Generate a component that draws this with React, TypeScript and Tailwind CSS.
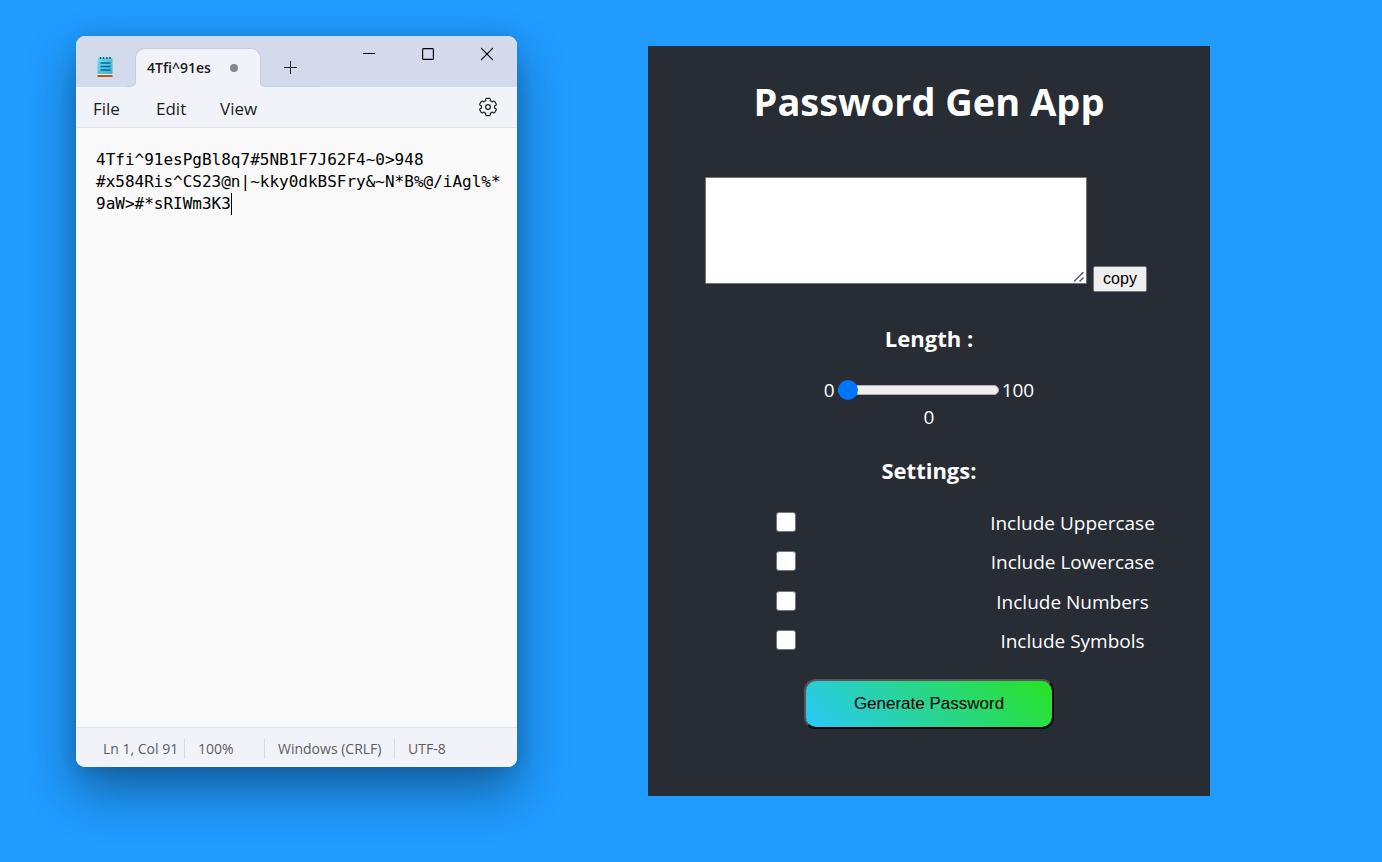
import { useState } from "react";

const OPTIONS = ["Uppercase", "Lowercase", "Numbers", "Symbols"];

function NotepadLogo() {
  return (
    <svg width="16" height="22" viewBox="0 0 16 22" aria-hidden="true">
      <defs>
        <linearGradient id="pad" x1="0" y1="0" x2="1" y2="1">
          <stop offset="0" stopColor="#6fdcf0" />
          <stop offset="1" stopColor="#39afd0" />
        </linearGradient>
      </defs>
      <rect x="0.5" y="17" width="15" height="2" fill="#f3ece6" />
      <rect x="0.5" y="19" width="15" height="2" fill="#b5560f" />
      <rect x="0.5" y="2" width="15" height="16" rx="0.5" fill="url(#pad)" />
      <path d="M3.5 1v2M6.5 1v2M10 1v2M13 1v2" stroke="#0d5f85" strokeWidth="1.6" />
      <path d="M3.5 7h10M3.5 10.5h10M3.5 14h10" stroke="#0a6a93" strokeWidth="1.7" />
    </svg>
  );
}

function polar(degrees: number, radius: number) {
  const a = (degrees * Math.PI) / 180;
  return `${(10 + radius * Math.cos(a)).toFixed(2)} ${(10 + radius * Math.sin(a)).toFixed(2)}`;
}

const GEAR_PATH =
  [0, 1, 2, 3, 4, 5]
    .map((k) => {
      const a = 30 + 60 * k;
      return `${k === 0 ? "M" : "L"}${polar(a - 19, 6.9)}L${polar(a - 17, 8.1)}Q${polar(a - 15, 8.7)} ${polar(a - 11, 8.7)}L${polar(a + 11, 8.7)}Q${polar(a + 15, 8.7)} ${polar(a + 17, 8.1)}L${polar(a + 19, 6.9)}Q${polar(a + 21, 6.3)} ${polar(a + 26, 6.7)}L${polar(a + 34, 6.7)}Q${polar(a + 39, 6.3)} ${polar(a + 41, 6.9)}`;
    })
    .join("") + "Z";

function GearIcon() {
  return (
    <svg width="20" height="20" viewBox="0 0 20 20" fill="none" stroke="#222" strokeWidth="1.2" strokeLinejoin="round" aria-hidden="true">
      <path d={GEAR_PATH} />
      <circle cx="10" cy="10" r="2.4" />
    </svg>
  );
}

function Notepad() {
  return (
    <section
      aria-label="Notepad"
      className="mt-9 flex h-[731px] w-[441px] shrink-0 flex-col overflow-hidden rounded-[9px] bg-[#f9f9f9] font-['Open_Sans',sans-serif] text-[#1b1b1b] shadow-[0_24px_48px_rgba(0,0,0,0.38),0_0_16px_rgba(0,0,0,0.12)]"
    >
      <header className="flex h-[51px] shrink-0 items-end bg-[#d2daeb]">
        <div className="flex h-10 w-[59px] items-center pl-[21px]">
          <NotepadLogo />
        </div>
        <div className="relative flex h-[39px] w-[126px] items-center justify-between rounded-t-[10px] border border-b-0 border-[#c6cde2] bg-[#f2f3f9] pr-[22px] pl-[11px]">
          <svg width="10" height="6" viewBox="0 0 10 6" className="absolute bottom-0 -left-[10px]" aria-hidden="true">
            <path d="M0 6h10V0Q10 5.500 4 5.500H0Z" fill="#f2f3f9" />
            <path d="M10 0Q10 5.500 4 5.500H0" fill="none" stroke="#c6cde2" />
          </svg>
          <svg width="10" height="6" viewBox="0 0 10 6" className="absolute -right-[10px] bottom-0" aria-hidden="true">
            <path d="M10 6H0V0Q0 5.500 6 5.500H10Z" fill="#f2f3f9" />
            <path d="M0 0Q0 5.500 6 5.500H10" fill="none" stroke="#c6cde2" />
          </svg>
          <span className="text-sm font-semibold">4Tfi^91es</span>
          <span className="size-2 rounded-full bg-[#868789]" />
        </div>
        <button aria-label="New tab" className="flex h-[39px] w-[58px] items-center justify-center border-b border-[#c9cfe2]">
          <svg width="13" height="13" viewBox="0 0 13 13" stroke="#222" fill="none">
            <path d="M6.5 0v13M0 6.5h13" />
          </svg>
        </button>
        <div className="flex h-full flex-1 justify-end gap-[47px] pt-[11px] pr-6">
          <button aria-label="Minimize" className="size-3">
            <svg width="12" height="14" viewBox="0 0 12 14" stroke="#000" fill="none">
              <path d="M0 6.5h12" />
            </svg>
          </button>
          <button aria-label="Maximize" className="size-3">
            <svg width="12" height="14" viewBox="0 0 12 14" stroke="#000" fill="none">
              <rect x=".6" y="1.6" width="10.8" height="10.8" rx="1" strokeWidth="1.2" />
            </svg>
          </button>
          <button aria-label="Close" className="size-3">
            <svg width="12" height="14" viewBox="0 0 12 14" stroke="#000" fill="none">
              <path d="M0 1l12 12M12 1L0 13" strokeWidth="1.1" />
            </svg>
          </button>
        </div>
      </header>
      <nav className="flex h-[41px] shrink-0 items-center border-b border-[#e4e5ec] bg-[#f2f3f9] pt-1 pr-[19px] pl-[17px] text-[17px]">
        <button className="w-[63px] text-left">File</button>
        <button className="w-16 text-left">Edit</button>
        <button className="text-left">View</button>
        <button aria-label="Settings" className="mb-1 ml-auto">
          <GearIcon />
        </button>
      </nav>
      <div className="flex-1 px-5 pt-[21px] font-['DejaVu_Sans_Mono',monospace] text-base leading-[22px] whitespace-nowrap text-black">
        <p>4Tfi^91esPgBl8q7#5NB1F7J62F4~0&gt;948</p>
        <p>{"#x584Ris^CS23@n|~kky0dkBSFry&~N*B%@/iAgl%*"}</p>
        <p className="flex">
          9aW&gt;#*sRIWm3K3
          <span className="h-[22px] w-px bg-black" />
        </p>
      </div>
      <footer className="flex h-10 shrink-0 items-center border-t border-[#e0e4ea] bg-[#f2f3f9] pt-[2px] pl-[27px] text-sm text-[#5c5d61]">
        <span className="w-[81px]">Ln 1, Col 91</span>
        <span className="h-5 w-[14px] border-l border-[#d9dadf]" />
        <span className="w-[66px]">100%</span>
        <span className="h-5 w-[14px] border-l border-[#d9dadf]" />
        <span className="w-[116px]">Windows (CRLF)</span>
        <span className="h-5 w-[14px] border-l border-[#d9dadf]" />
        <span>UTF-8</span>
      </footer>
    </section>
  );
}

function PasswordGenerator() {
  const [length, setLength] = useState(0);
  return (
    <main className="mt-[46px] flex h-[750px] w-[562px] shrink-0 flex-col items-center bg-[#282c34] font-['Open_Sans',sans-serif] text-white">
      <h1 className="mt-7 text-[38px] leading-[54px] font-bold">Password Gen App</h1>
      <div className="mt-[49px] mr-[6px] flex items-end gap-[6px]">
        <div className="relative mb-2">
          <textarea
            aria-label="Generated password"
            className="block h-[107px] w-[382px] rounded-[1px] border border-[#767676] bg-white p-1 text-black [&::-webkit-resizer]:bg-white"
          />
          <svg width="10" height="10" viewBox="0 0 10 10" className="pointer-events-none absolute right-[3px] bottom-[2px]" stroke="#555" strokeWidth="1.4" aria-hidden="true">
            <path d="M0 9.500L9.500 0M5.500 9.500L9.500 5.500" />
          </svg>
        </div>
        <button className="h-[26px] w-[54px] rounded-[2px] border border-[#767676] bg-[#efefef] font-['Liberation_Sans',sans-serif] text-base leading-6 text-black">
          copy
        </button>
      </div>
      <h2 className="mt-[31px] text-[22px] leading-[30px] font-bold">Length :</h2>
      <div className="mt-6 flex items-center gap-[3px] text-[19px] leading-[27px]">
        <span>0</span>
        <input
          type="range"
          aria-label="Length"
          min={0}
          max={100}
          value={length}
          onChange={(e) => setLength(Number(e.target.value))}
          className="mb-[2px] h-5 w-[161px] appearance-none bg-transparent [&::-webkit-slider-runnable-track]:h-[10px] [&::-webkit-slider-runnable-track]:rounded-full [&::-webkit-slider-runnable-track]:border [&::-webkit-slider-runnable-track]:border-[#b2b2b2] [&::-webkit-slider-runnable-track]:bg-[#efefef] [&::-webkit-slider-thumb]:-mt-[6px] [&::-webkit-slider-thumb]:-ml-px [&::-webkit-slider-thumb]:size-5 [&::-webkit-slider-thumb]:appearance-none [&::-webkit-slider-thumb]:rounded-full [&::-webkit-slider-thumb]:bg-[#0075ff]"
        />
        <span>100</span>
      </div>
      <output className="text-[19px] leading-[27px]">{length}</output>
      <h2 className="mt-6 text-[22px] leading-[30px] font-bold">Settings:</h2>
      <div className="mt-[18px] flex h-[158px] w-full flex-col text-[19px]">
        {OPTIONS.map((name) => (
          <div key={name} className="flex flex-1 items-center gap-3">
            <div className="flex w-[275px] justify-center pb-[2px]">
              <input
                id={name}
                type="checkbox"
                className="size-5 appearance-none rounded-[3px] border border-[#767676] bg-white checked:bg-[#0075ff]"
              />
            </div>
            <label htmlFor={name} className="flex-1 text-center">
              Include {name}
            </label>
          </div>
        ))}
      </div>
      <button className="mt-[18px] h-[50px] w-[250px] rounded-xl border-2 border-t-[#555] border-r-black border-b-black border-l-[#555] bg-[linear-gradient(45deg,#29c9fa,#27e321)] font-['Liberation_Sans',sans-serif] text-[17px] text-black">
        Generate Password
      </button>
    </main>
  );
}

export default function App() {
  return (
    <div className="flex min-h-screen items-start gap-[131px] bg-[#209bff] pl-[76px]">
      <Notepad />
      <PasswordGenerator />
    </div>
  );
}
